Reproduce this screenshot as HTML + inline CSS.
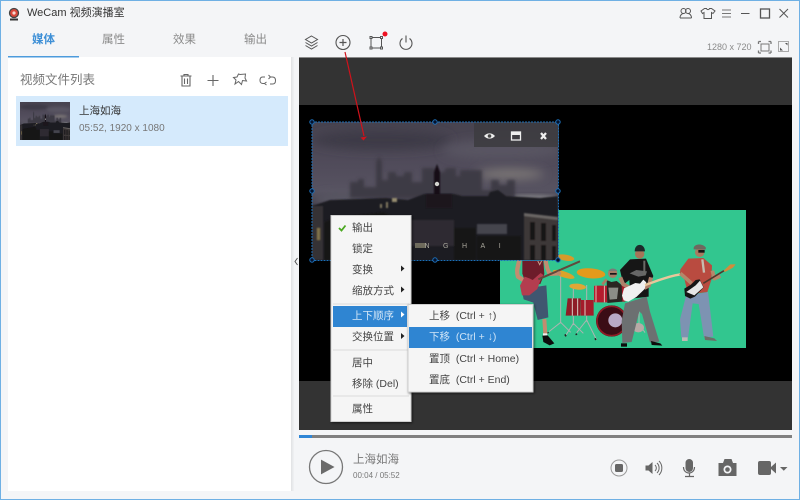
<!DOCTYPE html>
<html lang="zh">
<head>
<meta charset="utf-8">
<title>WeCam 视频演播室</title>
<style>
html,body{margin:0;padding:0;width:800px;height:500px;overflow:hidden;background:#f4f5f7}
body{position:relative;font-family:"Liberation Sans","Noto Sans CJK SC",sans-serif;color:#444}
.t{position:absolute;white-space:nowrap;line-height:1}
svg{position:absolute;left:0;top:0}
.m{font-size:10.5px;color:#444}
</style>
</head>
<body>
<svg width="800" height="500" viewBox="0 0 800 500" fill="none">
<defs>
<linearGradient id="sky" x1="0" y1="0" x2="0" y2="1">
<stop offset="0" stop-color="#47434f"/><stop offset=".3" stop-color="#504b5a"/><stop offset=".5" stop-color="#575361"/><stop offset=".6" stop-color="#403d48"/><stop offset="1" stop-color="#181618"/>
</linearGradient>
<filter id="b0" x="-5%" y="-5%" width="110%" height="110%"><feGaussianBlur stdDeviation="0.45"/></filter>
<filter id="b1"><feGaussianBlur stdDeviation="0.8"/></filter>
<filter id="b2" x="-40%" y="-80%" width="180%" height="260%"><feGaussianBlur stdDeviation="5"/></filter>
<filter id="b3" x="-20%" y="-20%" width="140%" height="140%"><feGaussianBlur stdDeviation="1.6"/></filter>
<filter id="sh" x="-10%" y="-10%" width="120%" height="120%"><feDropShadow dx="1" dy="1" stdDeviation="1.2" flood-color="#000" flood-opacity=".55"/></filter>
<clipPath id="cc"><rect width="246" height="138"/></clipPath>
<g id="city"><g clip-path="url(#cc)">
<rect width="246" height="138" fill="url(#sky)"/>
<ellipse cx="70" cy="18" rx="70" ry="10" fill="#3e3a47" filter="url(#b2)"/>
<ellipse cx="190" cy="28" rx="60" ry="10" fill="#595562" filter="url(#b2)"/>
<ellipse cx="198" cy="52" rx="34" ry="5" fill="#7f7a78" filter="url(#b2)"/>
<ellipse cx="218" cy="76" rx="30" ry="3.500" fill="#7c7a80" filter="url(#b3)"/>
<ellipse cx="30" cy="78" rx="30" ry="6" fill="#5c5a66" filter="url(#b2)"/>
<g filter="url(#b3)">
<path d="M38 76V60h8v-3h6v8h12V40l3-6 3 6v18h6v-8h8v4h8v-4h8v10h10V46h14v4h8l2-4h10v8h4V48h22v20h9v-10h8v5h8v-5h8v18z" fill="#3c3a45"/>
</g>
<path d="M0 84l18-6 56-2 22 2 16-6h30l8 2 26 0 2-4 8-2 8 6 34 2 18-2v66H0z" fill="#1f1d20" filter="url(#b1)"/>
<g filter="url(#b1)">
<path d="M122 72V50l3-8 3 8v22z" fill="#131115"/>
<path d="M114 86V72h26v14z" fill="#1a181c"/>
<path d="M0 84h11v54H0z" fill="#363234"/>
<path d="M12 100l10-4 50-6 8 4v44H12z" fill="#141214"/>
<path d="M74 100h24v38H74z" fill="#191719"/>
<path d="M98 98h44v26H98z" fill="#2e2b31"/>
<path d="M142 106h22v32h-22z" fill="#181618"/>
<path d="M165 102h30v10h-30z" fill="#44444e"/>
<path d="M165 114h44v24h-44z" fill="#161415"/>
<path d="M212 92l34 5v41h-34z" fill="#3d3839"/>
<path d="M212 91l34 4v3l-34-4z" fill="#6a6665"/>
<path d="M218 100h5v18h-5zM229 101h5v18h-5zM240 103h4v16h-4zM218 123h5v15h-5zM229 123h5v15h-5zM240 124h4v14h-4z" fill="#141213"/>
<path d="M5 106h3v12H5z" fill="#80724a"/>
<path d="M80 76h5v4h-5z" fill="#968c70"/>
<path d="M74 80h2v6h-2zM68 82h2v4h-2z" fill="#827860"/>
</g>
<circle cx="125" cy="62" r="2.200" fill="#d4d4cf"/>
</g></g>
</defs>

<rect x="0" y="0" width="800" height="500" fill="#f4f5f7"/>
<rect x=".5" y=".5" width="799" height="499" stroke="#6fb0e4"/>

<!-- left panel -->
<rect x="8" y="57" width="283" height="434" fill="#fff"/>
<rect x="291" y="57" width="1.500" height="434" fill="#e3e4e6"/>
<rect x="292.500" y="57" width="1.500" height="434" fill="#eeeff1"/>
<rect x="8" y="56" width="71" height="1.500" fill="#4d9bdc"/>
<rect x="16" y="96" width="272" height="50" fill="#d5eafc"/>
<svg x="20" y="102" width="50" height="38" viewBox="0 0 246 187" preserveAspectRatio="none"><g transform="scale(1 1.36)"><use href="#city"/></g></svg>

<!-- preview -->
<rect x="299" y="57" width="493" height="1" fill="#8a8a8a"/>
<rect x="299" y="58" width="493" height="47" fill="#333"/>
<rect x="299" y="105" width="493" height="276" fill="#000"/>
<rect x="299" y="381" width="493" height="49" fill="#333"/>
<rect x="299" y="430" width="493" height="5" fill="#f4f5f7"/>
<path d="M297.500 258l-2.500 3.500 2.500 3.500" stroke="#555" stroke-width="1"/>

<!-- green layer -->
<rect x="500" y="210" width="246" height="138" fill="#32c68f"/>

<!-- band: left part -->
<g transform="translate(515 245) scale(.33333)" filter="url(#b0)">
  <path d="M137 70v165M137 232l-35 28M137 232l30 30M175 130v110M175 235l-22 35M175 235l30 30M215 120v110M215 225l-30 38M215 225l30 60" stroke="#aeb4b2" stroke-width="3"/>
  <path d="M98 262l2 3M150 268l3 6M183 266l2 4M240 280l3 5" stroke="#222" stroke-width="5"/>
  <ellipse cx="152" cy="38" rx="26" ry="9" fill="#d79a2b" transform="rotate(10 152 38)"/>
  <ellipse cx="146" cy="88" rx="34" ry="9" fill="#dca22c" transform="rotate(18 146 88)"/>
  <ellipse cx="228" cy="85" rx="43" ry="15" fill="#e39a1b" transform="rotate(5 228 85)"/>
  <ellipse cx="188" cy="125" rx="25" ry="9" fill="#dfa634" transform="rotate(5 188 125)"/>
  <path d="M158 160h40l-3 52h-43z" fill="#8e1a26"/>
  <path d="M198 165h38v47h-40z" fill="#a41f2c"/>
  <path d="M172 160v52M188 160v52M210 165v47" stroke="#d9cfc5" stroke-width="3"/>
  <rect x="237" y="122" width="40" height="50" rx="3" fill="#b51f2d"/>
  <rect x="300" y="122" width="32" height="48" rx="3" fill="#a81f2b"/>
  <path d="M243 122v50M268 122v50" stroke="#e6d6cc" stroke-width="2.500"/>
  <path d="M275 105l14 6 16-3 15 12 2 50-45 4z" fill="#2a2724"/>
  <path d="M280 128h30l-4 34-22 2z" fill="#8b8d87"/>
  <path d="M262 118l13-15M322 105l8 18" stroke="#a97b63" stroke-width="8"/>
  <circle cx="293" cy="85" r="14" fill="#a57d68"/>
  <path d="M280 78c4-9 22-10 27 0z" fill="#787a78"/>
  <path d="M285 84h20v5h-20z" fill="#151515"/>
  <circle cx="290" cy="228" r="47" fill="#3a1014"/>
  <circle cx="290" cy="228" r="44" stroke="#8e1a26" stroke-width="5"/>
  <circle cx="301" cy="226" r="21" fill="#b9a9c6"/>
  <!-- bass player -->
  <path d="M13 45c-4 20-10 32-4 50l22 14" stroke="#c28c70" stroke-width="13" stroke-linejoin="round"/>
  <path d="M92 45c2 18 6 30 12 42l32-2" stroke="#c28c70" stroke-width="12" stroke-linejoin="round"/>
  <path d="M22 47h63l3 40-12 30-42 3-12-34z" fill="#6d1c2b"/>
  <path d="M68 47l6 12 6-12" stroke="#c9a18d" stroke-width="3"/>
  <path d="M22 143l20-14 52-8 6 96-32 8-13-52-29-10z" fill="#41566f"/>
  <path d="M88 222l3 45" stroke="#c28c70" stroke-width="12"/>
  <path d="M84 265h13v8H84z" fill="#eee"/>
  <path d="M82 272l16-1 20 24-14 6-19-10z" fill="#101010"/>
  <path d="M15 122l14-27 16 6 8 4 24-21 8 6-10 20-8 22-24 19-22 0z" fill="#b33c50"/>
  <path d="M70 103l125-54" stroke="#62483b" stroke-width="6"/>
  <circle cx="132" cy="85" r="6" fill="#b98a6e"/>
</g>

<!-- band: guitarists -->
<g transform="translate(615 240) scale(.33333)" filter="url(#b0)">
  <path d="M72 205v50M72 250l-20 28M72 250l18 28" stroke="#aeb4b2" stroke-width="3"/>
  <ellipse cx="70" cy="263" rx="17" ry="14" fill="#b7aaa6"/>
  <!-- middle -->
  <path d="M30 190l65-20 10 45 28 90-28 2-24-85-8-8-23 92-28 3-2-66z" fill="#6c7071"/>
  <path d="M18 310h18v10H18z" fill="#0f0f0f"/>
  <path d="M108 303l28 7 6 7-32-2z" fill="#0f0f0f"/>
  <path d="M15 90l30-32 48-2 22 52-14 34 0 28-55 6-3-56-18 14z" fill="#181818"/>
  <path d="M44 100l20-10 32 4-4 12-22 4z" fill="#7b7b7b" opacity=".8"/>
  <path d="M88 62v44" stroke="#6a6a66" stroke-width="6"/>
  <path d="M16 112l8 20 30 18M108 112l-6 24-14 8" stroke="#b0806a" stroke-width="12" stroke-linejoin="round"/>
  <path d="M27 145l34-16 14 2 10-12 9 8-5 20-25 24-24 14-14-4-5-14z" fill="#f1f1f1"/>
  <path d="M90 135c36-12 68-26 107-32" stroke="#e9c79b" stroke-width="7"/>
  <circle cx="74" cy="42" r="14" fill="#a57458"/>
  <path d="M59 34c0-26 30-26 31 0z" fill="#1d2a2c"/>
  <!-- right -->
  <path d="M213 168l66-12 16 134-28 2-16-100-18-2-14 104-20-2-4-54z" fill="#7d93b2"/>
  <path d="M201 292h17v11h-17z" fill="#bdbbb5"/>
  <path d="M268 288l30 7 8 8-36-3z" fill="#6e6c68"/>
  <path d="M196 88l24-32 45-2 26 22-2 44-12 36-58 8-10-44-14-20z" fill="#b94b3f"/>
  <path d="M262 58l5 40" stroke="#c6bcb0" stroke-width="7"/>
  <path d="M196 100l34 30M292 92l6 24 18-8" stroke="#b5866b" stroke-width="11" stroke-linejoin="round"/>
  <path d="M208 146l20-12 14-14 12-2 12 24-26 28-14 6-16-8z" fill="#171717"/>
  <path d="M214 156l28-20 13-14 10 20-27 24z" fill="#e6e6e6"/>
  <path d="M265 130l62-38" stroke="#4f382d" stroke-width="5"/>
  <path d="M326 92l20-19 16 0-8 10-24 13z" fill="#d48b3a"/>
  <circle cx="254" cy="37" r="14" fill="#a87a60"/>
  <path d="M236 24c2-14 30-14 37 0l-2 5-35-1z" fill="#6e675e"/>
  <path d="M250 30h19v8h-19z" fill="#181818"/>
</g>

<!-- selected city layer -->
<svg x="312" y="122" width="246" height="138" viewBox="0 0 246 138"><use href="#city"/></svg>
<rect x="415" y="243" width="11" height="5" fill="#7f7c68" opacity=".8"/>
<text x="424.500" y="248" fill="#a9a79c" font-size="7" letter-spacing="13.500" font-family="Liberation Sans">NGHAI</text>

<!-- selection toolbar -->
<rect x="474" y="122" width="85" height="25" fill="#3d3c40" opacity=".9"/>
<path d="M484 136c3-3.500 8-3.500 11 0-3 3.500-8 3.500-11 0z" fill="#eee"/>
<circle cx="489.500" cy="136" r="1.800" fill="#444"/>
<rect x="511.500" y="132" width="9" height="8" stroke="#eee" stroke-width="1.300"/>
<rect x="511" y="132" width="10" height="3" fill="#eee"/>
<path d="M541 133l5 6M546 133l-5 6" stroke="#eee" stroke-width="2.200"/>

<!-- selection box -->
<rect x="312" y="122" width="246.500" height="138.500" stroke="#1d6fb8" stroke-width="1" stroke-dasharray="2 1"/>
<g fill="#06122b" stroke="#1d6fb8" stroke-width="1">
<circle cx="312" cy="122" r="2.200"/><circle cx="435" cy="122" r="2.200"/><circle cx="558" cy="122" r="2.200"/>
<circle cx="312" cy="191" r="2.200"/><circle cx="558" cy="191" r="2.200"/>
<circle cx="312" cy="260" r="2.200"/><circle cx="435" cy="260" r="2.200"/><circle cx="558" cy="260" r="2.200"/>
</g>

<!-- red annotation arrow -->
<path d="M345 52l19 84" stroke="#d0121b" stroke-width="1.200"/>
<path d="M360.500 137.500l3 3 3.500-4z" fill="#d0121b"/>

<!-- progress -->
<rect x="299" y="435" width="493" height="3" fill="#808080"/>
<rect x="299" y="435" width="13" height="3" fill="#2f86d6"/>

<!-- title logo -->
<circle cx="14" cy="13" r="4.500" fill="#d9473a" stroke="#444" stroke-width="1.300"/>
<circle cx="14" cy="13" r="1.600" fill="#f8d8d0"/>
<path d="M10 19.500h8" stroke="#333" stroke-width="2"/>

<!-- list tool icons -->
<g stroke="#666" stroke-width="1.100">
<path d="M180.500 76h11M184 76v-1.500h4V76M182 76.500v9.500h8v-9.500M184.500 78.500v5.500M187.500 78.500v5.500"/>
<path d="M213 75v11M207.500 80.500h11"/>
<path d="M240 74.500l5.500-.5-.5 4 1.500 3-4-.5-1 4-3-3-3.500 2.500 1-4-2.500-2.500 3.500-.5 1.500-3z" stroke-width="1"/>
<path d="M265 77h-2.500c-2 0-2.500 2-2.500 3.500s1 3 3 3h2M270 84h2.500c2 0 3-1.500 3-3.500s-1-3.500-3-3.500h-3M268.500 75l2 2-2 2M266.500 82l-2 1.500 2 1.500" stroke-width="1"/>
</g>

<!-- top toolbar icons -->
<g stroke="#555" stroke-width="1">
<path d="M311.500 36l6 3.500-6 3.500-6-3.500zM305.500 42.500l6 3.500 6-3.500M305.500 45.500l6 3.500 6-3.500"/>
<circle cx="343" cy="42.500" r="7" stroke-width="1.100"/>
<path d="M343 39v7M339.500 42.500h7" stroke-width="1.200"/>
<rect x="371" y="37.500" width="10.500" height="10.500"/>
<g fill="#f4f5f7"><rect x="370" y="36.500" width="2" height="2"/><rect x="380.500" y="36.500" width="2" height="2"/><rect x="370" y="47" width="2" height="2"/><rect x="380.500" y="47" width="2" height="2"/></g>
<path d="M402.500 38.500a6 6 0 1 0 7 0M406 35.500v7" stroke-width="1.100"/>
</g>
<circle cx="385" cy="34" r="2.500" fill="#ee1122"/>

<!-- window controls -->
<g stroke="#555" stroke-width="1">
<circle cx="683.500" cy="11" r="2.500"/><circle cx="688" cy="11" r="2.500"/>
<path d="M680 18c0-3 2-4.500 3.500-4.500M691.500 18c0-3-2-4.500-3.500-4.500M680 18h11.500"/>
<path d="M701 11l3.500-2.500h2c.5 1.500 2.500 1.500 3 0h2L715 11l-2 2.500-1.500-1V18.500H704v-6l-1.500 1z"/>
<path d="M722 10h9M722 13.500h9M722 17h9" stroke="#777"/>
<path d="M741 13.500h8.500"/>
<rect x="760.500" y="9" width="9" height="9" stroke-width="1.300"/>
<path d="M779.500 9l8.500 8.500M788 9l-8.500 8.500"/>
</g>
<g stroke="#777" stroke-width="1">
<rect x="761" y="44" width="8" height="7"/>
<path d="M758.500 41.500h2.500M758.500 41.500V44M771 41.500h-2.500M771 41.500V44M758.500 53h2.500M758.500 53v-2.500M771 53h-2.500M771 53v-2.500" stroke-width="1.300"/>
<rect x="778.500" y="41.500" width="10" height="10" stroke="#aaa"/>
<path d="M785 43h2.500v2.500zM780 47.500v3h3z" fill="#555" stroke="none"/>
</g>

<!-- player -->
<circle cx="326" cy="467" r="16.500" stroke="#777" stroke-width="1.300" fill="none"/>
<path d="M321.500 460.500l12 6.500-12 6.500z" fill="#6b6b6b" stroke="#6b6b6b" stroke-width="1"/>
<circle cx="619" cy="468" r="8" stroke="#999" stroke-width="1"/>
<rect x="615" y="464" width="8" height="8" rx="1.500" fill="#666"/>
<path d="M645.500 465.500h3l4-3.500v12l-4-3.500h-3z" fill="#666"/>
<path d="M655 465a4 4 0 0 1 0 6M657 463a7 7 0 0 1 0 10M659 461a10 10 0 0 1 0 14" stroke="#666" stroke-width="1"/>
<rect x="685.500" y="459" width="7.500" height="13" rx="3.700" fill="#666"/>
<path d="M683.500 467c0 8 11 8 11 0M689.500 473.500v2.500M685 476.500h9" stroke="#666" stroke-width="1.200"/>
<path d="M718.500 463h4.500l1.500-4h7l1.500 4h3.500v13h-18z" fill="#666"/>
<circle cx="727.500" cy="469.500" r="4" fill="#f4f5f7"/><circle cx="727.500" cy="469.500" r="2.300" fill="#666"/>
<rect x="758" y="461" width="13" height="14" rx="2" fill="#666"/>
<path d="M771 467l5-4.500v11l-5-4.500z" fill="#666"/>
<path d="M780 467h7.500l-3.700 3.800z" fill="#666"/>

<!-- context menu -->
<rect x="331" y="215.500" width="80" height="206" fill="#f5f5f5" stroke="#cfcfcf" filter="url(#sh)"/>
<rect x="333" y="306" width="74" height="21" fill="#2f85d2"/>
<path d="M333 304h76M333 350h76M333 396h76" stroke="#e4e4e4" stroke-width="1.500"/>
<path d="M339 228l2.500 2.500 4-5" stroke="#4aa820" stroke-width="1.800"/>
<g fill="#222"><path d="M401 265.500l3.500 3-3.500 3zM401 286.500l3.500 3-3.500 3zM401 333l3.500 3-3.500 3z"/></g>
<path d="M401 311.500l3.500 3-3.500 3z" fill="#fff"/>

<!-- submenu -->
<rect x="408" y="304.500" width="125" height="87.500" fill="#f5f5f5" stroke="#cfcfcf" filter="url(#sh)"/>
<rect x="409" y="327" width="123" height="21" fill="#2f85d2"/>
</svg>

<!-- text layer -->
<div class="t" style="left:27px;top:7.500px;font-size:11px;color:#333">WeCam 视频演播室</div>
<div class="t" style="left:32px;top:35px;font-size:11.500px;font-weight:700;color:#3d8fd6">媒体</div>
<div class="t" style="left:102px;top:35px;font-size:11.500px;color:#8a8a8a">属性</div>
<div class="t" style="left:173px;top:35px;font-size:11.500px;color:#8a8a8a">效果</div>
<div class="t" style="left:244px;top:35px;font-size:11.500px;color:#8a8a8a">输出</div>
<div class="t" style="left:20px;top:73.500px;font-size:12.500px;color:#777">视频文件列表</div>
<div class="t" style="left:79px;top:106px;font-size:10.500px;color:#333">上海如海</div>
<div class="t" style="left:79px;top:124px;font-size:10px;color:#777">05:52, 1920 x 1080</div>
<div class="t" style="left:707px;top:42.500px;font-size:9px;color:#8a8a8a">1280 x 720</div>
<div class="t" style="left:353px;top:455px;font-size:11.500px;color:#777">上海如海</div>
<div class="t" style="left:353px;top:472px;font-size:8px;color:#777">00:04 / 05:52</div>

<div class="t m" style="left:352px;top:223px">输出</div>
<div class="t m" style="left:352px;top:244px">锁定</div>
<div class="t m" style="left:352px;top:265px">变换</div>
<div class="t m" style="left:352px;top:286px">缩放方式</div>
<div class="t m" style="left:352px;top:311px;color:#d5e7f7">上下顺序</div>
<div class="t m" style="left:352px;top:332px">交换位置</div>
<div class="t m" style="left:352px;top:358px">居中</div>
<div class="t m" style="left:352px;top:379px">移除 (Del)</div>
<div class="t m" style="left:352px;top:404px">属性</div>

<div class="t m" style="left:429px;top:311px">上移&nbsp; (Ctrl + ↑)</div>
<div class="t m" style="left:429px;top:332px;color:#cfe4f7">下移&nbsp; (Ctrl + ↓)</div>
<div class="t m" style="left:429px;top:354px">置顶&nbsp; (Ctrl + Home)</div>
<div class="t m" style="left:429px;top:375px">置底&nbsp; (Ctrl + End)</div>
</body>
</html>
